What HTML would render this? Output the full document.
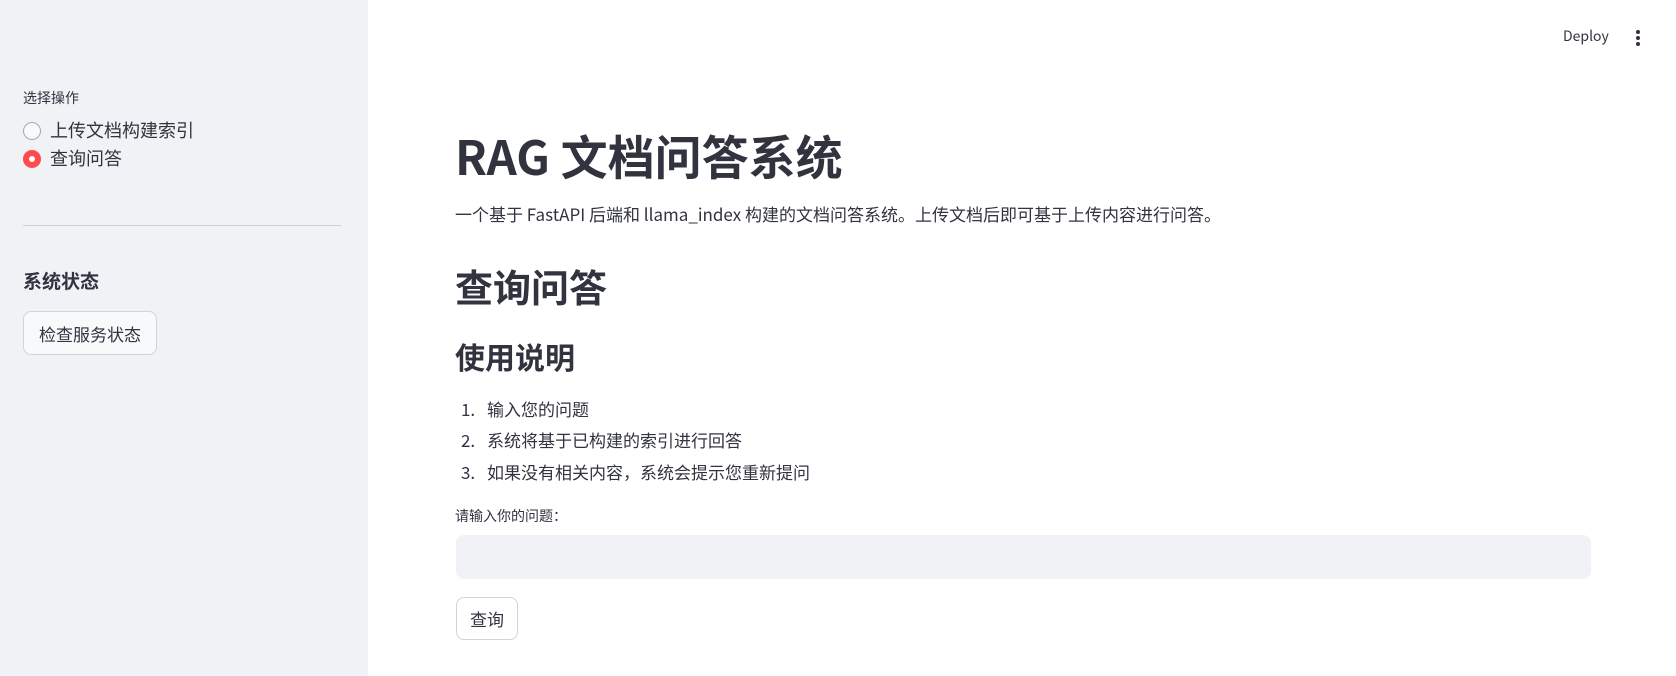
<!DOCTYPE html>
<html><head><meta charset="utf-8"><style>
*{margin:0;padding:0;box-sizing:border-box}
body{width:1676px;height:676px;overflow:hidden;background:#fff;color:#31333f;font-family:"Noto Sans CJK SC","Liberation Sans",sans-serif;position:relative}
.a{position:absolute;white-space:nowrap;line-height:1}
.sb{position:absolute;left:0;top:0;width:368px;height:676px;background:#f0f2f6}
.rad{position:absolute;width:18px;height:18px;border-radius:50%}
.btn{position:absolute;border:1px solid #d2d4da;border-radius:8px;background:#fff;display:flex;align-items:center;justify-content:center;font-size:17px;line-height:1}
</style></head><body>
<div class="sb"></div>
<div class="a" style="left:23px;top:91px;font-size:14px">选择操作</div>
<div class="rad" style="left:23px;top:122px;border:1px solid #a3a8b4;background:#f8f9fb"></div>
<div class="a" style="left:50px;top:121px;font-size:18px">上传文档构建索引</div>
<div class="rad" style="left:23px;top:150px;background:#ff4b4b"><div style="position:absolute;left:6px;top:6px;width:6px;height:6px;border-radius:50%;background:#fff"></div></div>
<div class="a" style="left:50px;top:149px;font-size:18px">查询问答</div>
<div style="position:absolute;left:23px;top:225px;width:318px;height:1px;background:#cfd1d6"></div>
<div class="a" style="left:23px;top:271px;font-size:19px;font-weight:bold">系统状态</div>
<div class="btn" style="left:23px;top:311px;width:134px;height:44px;background:#f8f9fb">检查服务状态</div>

<div class="a" style="left:1563px;top:29px;font-size:14px">Deploy</div>
<div style="position:absolute;left:1636px;top:30px;width:4px">
<div style="width:4px;height:4px;border-radius:50%;background:#31333f;margin-bottom:2px"></div>
<div style="width:4px;height:4px;border-radius:50%;background:#31333f;margin-bottom:2px"></div>
<div style="width:4px;height:4px;border-radius:50%;background:#31333f"></div></div>

<div class="a" style="left:455px;top:131px;font-size:47px;font-weight:bold">RAG 文档问答系统</div>
<div class="a" style="left:455px;top:205px;font-size:17px">一个基于 FastAPI 后端和 llama_index 构建的文档问答系统。上传文档后即可基于上传内容进行问答。</div>
<div class="a" style="left:455px;top:267px;font-size:38px;font-weight:bold">查询问答</div>
<div class="a" style="left:455px;top:341px;font-size:30px;font-weight:bold">使用说明</div>
<div class="a" style="left:461px;top:400px;font-size:17px">1.</div><div class="a" style="left:487px;top:400px;font-size:17px">输入您的问题</div>
<div class="a" style="left:461px;top:431px;font-size:17px">2.</div><div class="a" style="left:487px;top:431px;font-size:17px">系统将基于已构建的索引进行回答</div>
<div class="a" style="left:461px;top:463px;font-size:17px">3.</div><div class="a" style="left:487px;top:463px;font-size:17px">如果没有相关内容，系统会提示您重新提问</div>
<div class="a" style="left:455px;top:509px;font-size:14px">请输入你的问题：</div>
<div style="position:absolute;left:456px;top:535px;width:1135px;height:44px;background:#f0f2f6;border-radius:8px"></div>
<div class="btn" style="left:456px;top:597px;width:62px;height:43px">查询</div>
</body></html>
